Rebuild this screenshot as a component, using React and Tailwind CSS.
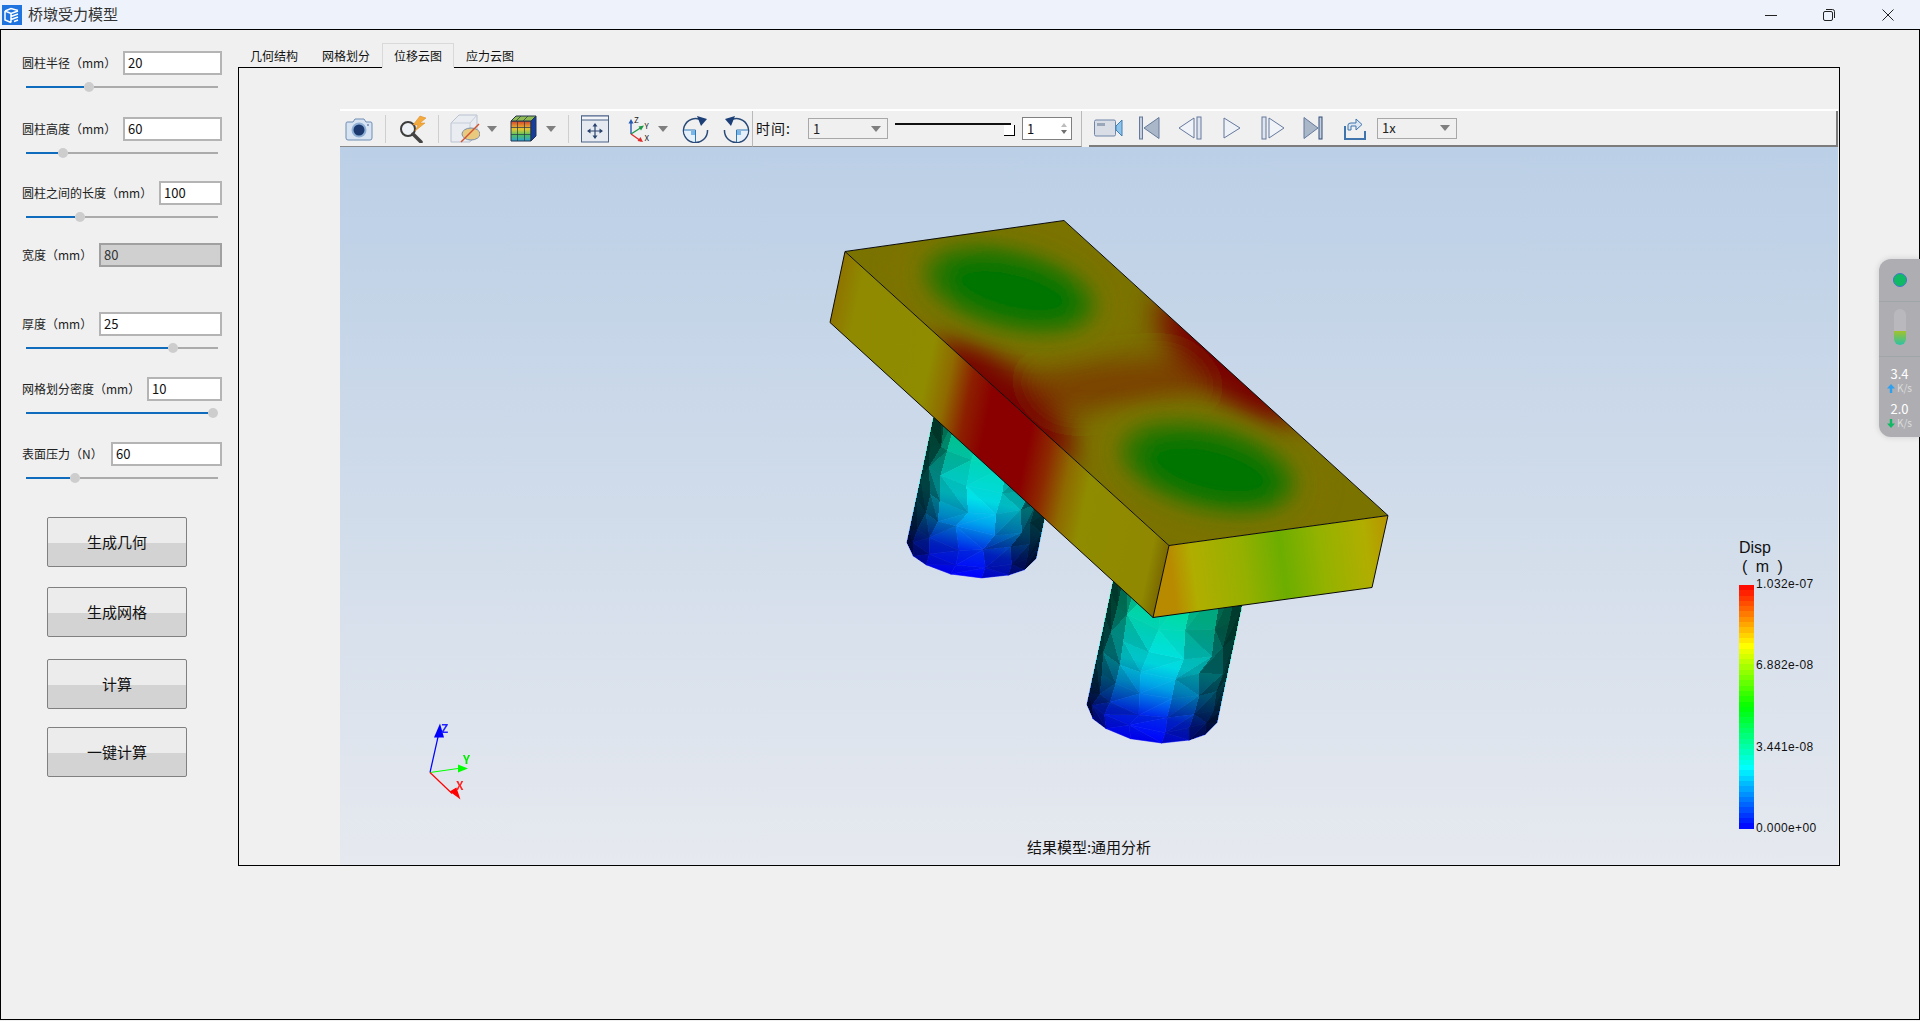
const fields = [
  { label: "圆柱半径（mm）", value: "20", inputClass: "w-[99px]", gapClass: "mt-0", thumb: 89 },
  { label: "圆柱高度（mm）", value: "60", inputClass: "w-[99px]", gapClass: "mt-[25px]", thumb: 63 },
  { label: "圆柱之间的长度（mm）", value: "100", inputClass: "w-[63px]", gapClass: "mt-[23px]", thumb: 80 },
  { label: "宽度（mm）", value: "80", inputClass: "w-[123px]", gapClass: "mt-[21px]", disabled: true },
  { label: "厚度（mm）", value: "25", inputClass: "w-[123px]", gapClass: "mt-[46px]", thumb: 173 },
  { label: "网格划分密度（mm）", value: "10", inputClass: "w-[75px]", gapClass: "mt-[24px]", thumb: 215 },
  { label: "表面压力（N）", value: "60", inputClass: "w-[111px]", gapClass: "mt-[24px]", thumb: 75 },
];

const actions = [
  { label: "生成几何", gapClass: "mt-[34px]" },
  { label: "生成网格", gapClass: "mt-[20px]" },
  { label: "计算", gapClass: "mt-[22px]" },
  { label: "一键计算", gapClass: "mt-[18px]" },
];

const tabs = ["几何结构", "网格划分", "位移云图", "应力云图"];

function Slider({ thumb }) {
  return (
    <div className="mt-[8px] ml-[25px] flex h-[10px] w-[192px] items-center">
      <div className="h-[2px] bg-[#0f6cbd]" style={{ width: thumb - 31 }} />
      <div className="h-[10px] w-[10px] shrink-0 rounded-full bg-[#cdcdcd]" />
      <div className="h-[2px] flex-1 bg-[#ababab]" />
    </div>
  );
}

function Field({ label, value, inputClass, gapClass, thumb, disabled }) {
  return (
    <div className={gapClass}>
      <div className="flex h-[23px] items-center justify-between pl-[21px] pr-[16px]">
        <span className="text-[12px] text-[#222]">{label}</span>
        <input
          readOnly
          value={value}
          className={`h-[24px] border-2 pl-[3px] text-[13px] outline-none ${inputClass} ${
            disabled ? "border-[#a0a0a0] bg-[#d0d0d0] text-[#333]" : "border-[#b4b4b4] bg-white text-[#111]"
          }`}
        />
      </div>
      {thumb && <Slider thumb={thumb} />}
    </div>
  );
}

function Sidebar() {
  return (
    <div className="w-[237px] shrink-0 pt-[21px]">
      {fields.map((f) => (
        <Field key={f.label} {...f} />
      ))}
      {actions.map((a) => (
        <div key={a.label} className={a.gapClass}>
          <button className="ml-[46px] block h-[50px] w-[140px] rounded-[2px] border border-[#808080] bg-[linear-gradient(#ececec_0_52%,#d3d3d3_52%_100%)] text-[15px] text-[#111]">
            {a.label}
          </button>
        </div>
      ))}
    </div>
  );
}

function Arrow({ className }) {
  return (
    <svg viewBox="0 0 10 6" className={`h-[6px] w-[10px] shrink-0 ${className}`}>
      <path d="M0 0H10L5 6Z" fill="#7f7f7f" />
    </svg>
  );
}

function ToolSep({ className }) {
  return <div className={`h-[28px] w-px shrink-0 bg-[#cfcfcf] ${className}`} />;
}

function CameraIcon({ className }) {
  return (
    <svg viewBox="0 0 28 24" className={`h-[24px] w-[28px] shrink-0 ${className}`}>
      <path d="M2 5H8L10 2H19L21 5H26Q27 5 27 7V21Q27 23 25 23H3Q1 23 1 21V7Q1 5 2 5Z" fill="#d8e4f2" stroke="#6f8db3" />
      <circle cx="14" cy="13" r="7.5" fill="#8fb0d4" />
      <circle cx="14" cy="13" r="5.5" fill="#1d3a70" />
      <circle cx="23" cy="8" r="1" fill="#6f8db3" />
    </svg>
  );
}

function SearchBoltIcon({ className }) {
  return (
    <svg viewBox="0 0 29 28" className={`h-[28px] w-[29px] shrink-0 ${className}`}>
      <circle cx="10" cy="14" r="7" fill="#eef2f6" stroke="#3c3c3c" strokeWidth="2" />
      <path d="M15 19L23 27" stroke="#444" strokeWidth="3.5" strokeLinecap="round" />
      <path d="M22 1L15 10H20L17 16L27 8H22L28 3Z" fill="#f3a93c" stroke="#d9851c" strokeWidth="0.5" />
    </svg>
  );
}

function HiddenCubeIcon({ className }) {
  return (
    <svg viewBox="0 0 30 29" className={`h-[29px] w-[30px] shrink-0 ${className}`}>
      <path d="M1 9L9 1H27V21L20 28H1Z" fill="#e9ecf1" stroke="#b9c2cf" />
      <path d="M1 9H20V28M20 9L27 1" fill="none" stroke="#c6ced9" />
      <ellipse cx="21" cy="20" rx="9" ry="6" fill="#e8c97e" stroke="#7d8fa8" />
      <path d="M11 28L29 10" stroke="#d3522e" strokeWidth="1.5" />
    </svg>
  );
}

function ColorCubeIcon({ className }) {
  return (
    <svg viewBox="0 0 27 27" className={`h-[27px] w-[27px] shrink-0 ${className}`}>
      <defs>
        <linearGradient id="cubeFront" x1="0" y1="0" x2="0" y2="1">
          <stop offset="0" stopColor="#d9402b" />
          <stop offset="0.4" stopColor="#e7c832" />
          <stop offset="0.7" stopColor="#50c060" />
          <stop offset="1" stopColor="#2aa0d8" />
        </linearGradient>
      </defs>
      <path d="M1 6H21V26H1Z" fill="url(#cubeFront)" stroke="#24364f" />
      <path d="M1 6L6 1H26L21 6Z" fill="#8fbb52" stroke="#24364f" />
      <path d="M21 6L26 1V21L21 26Z" fill="#173e9c" stroke="#24364f" />
      <path d="M7.5 6V26M14.5 6V26M1 12.5H21M1 19.5H21M11 1L6 6M18 1L13 6" stroke="#24364f" strokeWidth="0.7" />
    </svg>
  );
}

function FitIcon({ className }) {
  return (
    <svg viewBox="0 0 28 28" className={`h-[28px] w-[28px] shrink-0 ${className}`}>
      <rect x="0.5" y="1" width="27" height="26" fill="#e6eaf1" stroke="#4a6288" />
      <rect x="0.5" y="1" width="27" height="4" fill="#f2f4f8" stroke="#4a6288" />
      <path d="M14 9V23M7 16H21" stroke="#2c4570" strokeWidth="1.2" />
      <path d="M14 8L11.5 11.5H16.5ZM14 24L11.5 20.5H16.5ZM6 16L9.5 13.5V18.5ZM22 16L18.5 13.5V18.5Z" fill="#2c4570" />
    </svg>
  );
}

function AxesIcon({ className }) {
  return (
    <svg viewBox="0 0 26 28" className={`h-[28px] w-[26px] shrink-0 ${className}`}>
      <path d="M5 19V6" stroke="#2557b5" strokeWidth="1.4" />
      <path d="M5 4L2.5 8.5H7.5Z" fill="#2557b5" />
      <path d="M5 19L16 12" stroke="#1d9a47" strokeWidth="1.4" />
      <path d="M18 10.5L12.5 11.5L15 15.5Z" fill="#1d9a47" />
      <path d="M5 19L15 26" stroke="#e02b2b" strokeWidth="1.4" />
      <path d="M17 27L11.5 26L14.5 22Z" fill="#e02b2b" />
      <text x="8" y="7.5" fontSize="8" fill="#222">Z</text>
      <text x="18.5" y="14" fontSize="8" fill="#222">Y</text>
      <text x="18.5" y="26" fontSize="8" fill="#222">X</text>
    </svg>
  );
}

function RotateIcon({ flip, className }) {
  return (
    <svg viewBox="0 0 27 28" className={`h-[28px] w-[27px] shrink-0 ${flip ? "-scale-x-100" : ""} ${className}`}>
      <path d="M20 5.5A12 12 0 1 0 25.5 15" fill="none" stroke="#294a78" strokeWidth="1.5" />
      <path d="M15 1L25 4L19 11Z" fill="#1d3f78" />
      <path d="M13.5 15V26.5A11.5 11.5 0 0 1 2 15Z" fill="#e6f0fa" />
      <path d="M13.5 15H2M13.5 15V27" stroke="#2f78b8" strokeWidth="1" />
      <rect x="9" y="16" width="4" height="4" fill="#7ab7e6" />
    </svg>
  );
}

function CamRecIcon({ className }) {
  return (
    <svg viewBox="0 0 29 18" className={`h-[18px] w-[29px] shrink-0 ${className}`}>
      <rect x="0.5" y="1" width="21" height="16" rx="1.5" fill="#d9dee6" stroke="#6f86a8" />
      <rect x="3" y="4" width="8" height="3" fill="#9aa7b8" />
      <path d="M22 7L28 1V17L22 11Z" fill="#8fc4ea" stroke="#3f7fb8" />
    </svg>
  );
}

const playerStroke = "#64799c";

function PlayerIcon({ kind, className }) {
  if (kind === "first")
    return (
      <svg viewBox="0 0 21 24" className={`h-[24px] w-[21px] shrink-0 ${className}`}>
        <rect x="0.5" y="1" width="3" height="22" fill="#c5cfdd" stroke={playerStroke} />
        <path d="M20 1.5V22.5L5 12Z" fill="#aab7c9" stroke={playerStroke} />
      </svg>
    );
  if (kind === "prev")
    return (
      <svg viewBox="0 0 24 24" className={`h-[24px] w-[24px] shrink-0 ${className}`}>
        <path d="M16 2V22L1 12Z" fill="#f0f3f7" stroke={playerStroke} />
        <rect x="19" y="1" width="4" height="22" fill="#dfe5ee" stroke={playerStroke} />
      </svg>
    );
  if (kind === "play")
    return (
      <svg viewBox="0 0 18 24" className={`h-[24px] w-[18px] shrink-0 ${className}`}>
        <path d="M1 2V22L17 12Z" fill="#eef1f6" stroke={playerStroke} />
      </svg>
    );
  if (kind === "next")
    return (
      <svg viewBox="0 0 24 24" className={`h-[24px] w-[24px] shrink-0 ${className}`}>
        <rect x="1" y="1" width="4" height="22" fill="#dfe5ee" stroke={playerStroke} />
        <path d="M8 2V22L23 12Z" fill="#f0f3f7" stroke={playerStroke} />
      </svg>
    );
  return (
    <svg viewBox="0 0 20 24" className={`h-[24px] w-[20px] shrink-0 ${className}`}>
      <path d="M1 1.5V22.5L15 12Z" fill="#aab7c9" stroke={playerStroke} />
      <rect x="16" y="1" width="3" height="22" fill="#c5cfdd" stroke="#2f4d78" />
    </svg>
  );
}

function ExportIcon({ className }) {
  return (
    <svg viewBox="0 0 23 25" className={`h-[25px] w-[23px] shrink-0 ${className}`}>
      <path d="M2 10V23H22V15" fill="none" stroke="#3f74ad" strokeWidth="2" />
      <path d="M5 14V9Q5 7 8 7H13V3L19 8.5L13 14V10H8V14Z" fill="#dbe6f2" stroke="#3f74ad" />
    </svg>
  );
}

function Combo({ value, className }) {
  return (
    <div className={`flex h-[21px] w-[80px] shrink-0 items-center justify-between border border-[#a8a8a8] bg-[#f0f0f0] pl-[4px] pr-[6px] text-[13px] text-[#222] ${className}`}>
      <span>{value}</span>
      <Arrow />
    </div>
  );
}

function Toolbar() {
  return (
    <div className="flex h-[38px] shrink-0 border-t-2 border-white">
      <div className="flex w-[412px] shrink-0 items-center border-b border-[#8a8a8a]">
        <CameraIcon className="ml-[5px]" />
        <ToolSep className="ml-[12px]" />
        <SearchBoltIcon className="ml-[12px]" />
        <ToolSep className="ml-[11px]" />
        <HiddenCubeIcon className="ml-[11px]" />
        <Arrow className="ml-[7px]" />
        <ColorCubeIcon className="ml-[13px]" />
        <Arrow className="ml-[9px]" />
        <ToolSep className="ml-[12px]" />
        <FitIcon className="ml-[12px]" />
        <AxesIcon className="ml-[17px]" />
        <Arrow className="ml-[6px]" />
        <RotateIcon className="ml-[14px]" />
        <RotateIcon flip className="ml-[14px]" />
      </div>
      <div className="flex w-[330px] shrink-0 items-center border-x border-b border-x-[#b9b9b9] border-b-[#8a8a8a]">
        <span className="ml-[3px] w-[52px] shrink-0 text-[14px] tracking-[1px] text-[#111]">时间:</span>
        <Combo value="1" />
        <div className="ml-[7px] h-[18px] w-[120px] shrink-0">
          <div className="mt-[3px] h-[2px] w-[116px] bg-[#111]" />
          <div className="ml-[109px] h-[11px] w-[11px] border-r border-b border-black bg-white" />
        </div>
        <div className="ml-[7px] flex h-[23px] w-[50px] shrink-0 items-center justify-between border border-[#808080] bg-white pl-[4px] pr-[4px] text-[13px] text-[#111]">
          <span>1</span>
          <div className="flex flex-col gap-[3px]">
            <svg viewBox="0 0 6 4" className="h-[4px] w-[6px]"><path d="M0 4H6L3 0Z" fill="#bdbdbd" /></svg>
            <svg viewBox="0 0 6 4" className="h-[4px] w-[6px]"><path d="M0 0H6L3 4Z" fill="#707070" /></svg>
          </div>
        </div>
      </div>
      <div className="w-[7px] shrink-0" />
      <div className="flex flex-1 items-center border-r-2 border-b-2 border-[#7c7c7c]">
        <CamRecIcon className="ml-[5px]" />
        <PlayerIcon kind="first" className="ml-[16px]" />
        <PlayerIcon kind="prev" className="ml-[18px]" />
        <PlayerIcon kind="play" className="ml-[21px]" />
        <PlayerIcon kind="next" className="ml-[20px]" />
        <PlayerIcon kind="last" className="ml-[18px]" />
        <ExportIcon className="ml-[20px]" />
        <Combo value="1x" className="ml-[11px]" />
      </div>
    </div>
  );
}

// 腿部网格: 颜色走沿轴渐变, 每个三角形再按横向位置压暗
const lerp = (a, b, t) => a + (b - a) * t;
const noise = (i) => {
  const s = Math.sin(i * 12.9898) * 43758.5453;
  return s - Math.floor(s);
};

const legStops = [
  [0.2, "#00e8b0"],
  [0.36, "#00e4d0"],
  [0.52, "#00e4ec"],
  [0.66, "#00a5ee"],
  [0.84, "#0028eb"],
  [1, "#0000ff"],
];
const shadeStops = [
  [0, 0.18],
  [0.07, 0.34],
  [0.18, 0.72],
  [0.38, 0.97],
  [0.55, 1],
  [0.75, 0.72],
  [0.9, 0.36],
  [1, 0.18],
];

function sample(stops, t) {
  for (let i = 1; i < stops.length; i++) {
    if (t <= stops[i][0]) {
      const k = (t - stops[i - 1][0]) / (stops[i][0] - stops[i - 1][0]);
      const a = stops[i - 1][1];
      const b = stops[i][1];
      return Array.isArray(a) ? a.map((v, n) => lerp(v, b[n], k)) : lerp(a, b, k);
    }
  }
  return stops[stops.length - 1][1];
}

function legFacets({ L0, L1, R0, R1, arc, seed }) {
  const us = [0, 0.07, 0.18, 0.38, 0.62, 0.82, 0.93, 1];
  const vs = [0, 0.3, 0.46, 0.6, 0.72, 0.84, 0.93, 1];
  const len = Math.hypot(L1[0] - L0[0], L1[1] - L0[1]);
  const axis = [(L1[0] - L0[0]) / len, (L1[1] - L0[1]) / len];
  const point = (i, j) => {
    const u = us[i];
    const v = vs[j];
    const inner = i > 0 && i < us.length - 1 && j > 0 && j < vs.length - 1;
    const wob = inner ? (noise(seed + i * 31 + j * 7) - 0.5) * 9 : 0;
    const bulge = Math.sqrt(Math.max(0, Math.sin(Math.PI * u))) * arc;
    const lx = lerp(L0[0], L1[0], v);
    const ly = lerp(L0[1], L1[1], v);
    const rx = lerp(R0[0], R1[0], v);
    const ry = lerp(R0[1], R1[1], v);
    return [lerp(lx, rx, u) + axis[0] * bulge + wob, lerp(ly, ry, u) + axis[1] * bulge + wob * 0.7];
  };
  const tris = [];
  for (let i = 0; i < us.length - 1; i++) {
    for (let j = 0; j < vs.length - 1; j++) {
      const corners = [[i, j], [i + 1, j], [i + 1, j + 1], [i, j + 1]];
      const [a, b, c, d] = corners;
      const flip = noise(seed + i * 5 + j * 11) > 0.5;
      const pairs = flip ? [[a, b, c], [a, c, d]] : [[a, b, d], [b, c, d]];
      pairs.forEach((tri, n) => {
        const u = tri.reduce((s, p) => s + us[p[0]], 0) / 3;
        const shade = sample(shadeStops, u) * (0.94 + noise(seed + i * 13 + j * 17 + n) * 0.1);
        const pts = tri.map((p) => point(p[0], p[1]).map((x) => x.toFixed(1)).join(",")).join(" ");
        tris.push({ points: pts, dark: Math.max(0, 1 - shade).toFixed(3) });
      });
    }
  }
  const start = [(L0[0] + R0[0]) / 2 + axis[0] * arc, (L0[1] + R0[1]) / 2 + axis[1] * arc];
  const end = [(L1[0] + R1[0]) / 2 + axis[0] * arc, (L1[1] + R1[1]) / 2 + axis[1] * arc];
  return { tris, start, end };
}

const legs = [
  { id: "legBack", ...legFacets({ L0: [941, 383], L1: [907, 543], R0: [1070, 399], R1: [1036, 559], arc: 27, seed: 3 }) },
  { id: "legFront", ...legFacets({ L0: [1121, 545], L1: [1087, 705], R0: [1251, 563], R1: [1217, 723], arc: 29, seed: 9 }) },
];

function Leg({ id, tris, start, end }) {
  return (
    <g>
      <defs>
        <linearGradient id={id} gradientUnits="userSpaceOnUse" x1={start[0]} y1={start[1]} x2={end[0]} y2={end[1]}>
          {legStops.map(([o, c]) => (
            <stop key={o} offset={o} stopColor={c} />
          ))}
        </linearGradient>
      </defs>
      {tris.map((t, i) => (
        <polygon key={i} points={t.points} fill={`url(#${id})`} stroke={`url(#${id})`} strokeWidth="0.6" />
      ))}
      {tris.map((t, i) => (
        <polygon key={i} points={t.points} fill="#000" fillOpacity={t.dark} shapeRendering="crispEdges" />
      ))}
    </g>
  );
}

function Model() {
  return (
    <svg viewBox="340 148 1498 717" className="absolute inset-0 h-full w-full">
      <defs>
        <linearGradient id="sideFace" gradientUnits="userSpaceOnUse" x1="845" y1="252" x2="1214" y2="330">
          <stop offset="0" stopColor="#8f7400" />
          <stop offset="0.06" stopColor="#8f8a00" />
          <stop offset="0.28" stopColor="#8f8c00" />
          <stop offset="0.34" stopColor="#8f6a00" />
          <stop offset="0.4" stopColor="#8c2000" />
          <stop offset="0.46" stopColor="#8a0000" />
          <stop offset="0.58" stopColor="#8a0000" />
          <stop offset="0.64" stopColor="#8c2a00" />
          <stop offset="0.7" stopColor="#8e6a00" />
          <stop offset="0.76" stopColor="#8f8c00" />
          <stop offset="0.96" stopColor="#8f8800" />
          <stop offset="1" stopColor="#7c6a00" />
        </linearGradient>
        <linearGradient id="endFace" gradientUnits="userSpaceOnUse" x1="1168" y1="546" x2="1388" y2="516">
          <stop offset="0" stopColor="#b88a00" />
          <stop offset="0.1" stopColor="#b0ae00" />
          <stop offset="0.32" stopColor="#96b000" />
          <stop offset="0.5" stopColor="#6cae00" />
          <stop offset="0.68" stopColor="#94b200" />
          <stop offset="0.88" stopColor="#b0ae00" />
          <stop offset="1" stopColor="#b89400" />
        </linearGradient>
        <clipPath id="topClip">
          <polygon points="845,252 1064,221 1388,516 1169,546" />
        </clipPath>
        <filter id="softA" filterUnits="userSpaceOnUse" x="700" y="100" width="800" height="600">
          <feGaussianBlur stdDeviation="15" />
        </filter>
        <filter id="softB" filterUnits="userSpaceOnUse" x="700" y="100" width="800" height="600">
          <feGaussianBlur stdDeviation="11" />
        </filter>
      </defs>

      {legs.map((leg) => (
        <Leg key={leg.id} {...leg} />
      ))}

      <polygon points="845,252 1169,546 1153,618 830,323" fill="url(#sideFace)" />
      <polygon points="1169,546 1388,516 1372,588 1153,618" fill="url(#endFace)" />

      <g clipPath="url(#topClip)">
        <polygon points="845,252 1064,221 1388,516 1169,546" fill="#7b7300" />
        <g filter="url(#softA)">
          <ellipse cx="1115" cy="385" rx="120" ry="24" transform="rotate(-6 1115 385)" fill="#7a4000" />
          <ellipse cx="1005" cy="402" rx="90" ry="32" transform="rotate(42 1005 402)" fill="#780000" />
          <ellipse cx="1228" cy="362" rx="90" ry="34" transform="rotate(42 1228 362)" fill="#780000" />
        </g>
        <g filter="url(#softB)">
          <ellipse cx="1008" cy="290" rx="116" ry="56" transform="rotate(14 1008 290)" fill="#7e7500" />
          <ellipse cx="1206" cy="466" rx="116" ry="56" transform="rotate(14 1206 466)" fill="#7e7500" />
        </g>
        <g filter="url(#softB)">
          <ellipse cx="1010" cy="290" rx="88" ry="40" transform="rotate(14 1010 290)" fill="#2f7500" />
          <ellipse cx="1208" cy="468" rx="90" ry="42" transform="rotate(14 1208 468)" fill="#2f7500" />
          <ellipse cx="1012" cy="291" rx="72" ry="31" transform="rotate(14 1012 291)" fill="#007500" />
          <ellipse cx="1210" cy="470" rx="74" ry="33" transform="rotate(14 1210 470)" fill="#007500" />
        </g>
      </g>

      <path
        d="M845 252L1064 221L1388 516L1169 546ZM845 252L830 323L1153 618L1169 546M1153 618L1372 588L1388 516"
        fill="none"
        stroke="#0a0a0a"
        strokeWidth="1"
        strokeLinejoin="round"
      />

      {/* 坐标轴 */}
      <g strokeWidth="1.2">
        <path d="M430 773L439 733" stroke="#0000ff" />
        <path d="M440 724L434 738H444Z" fill="#0000ff" />
        <path d="M430 773L458 769" stroke="#00ff00" />
        <path d="M468 769L458 765V773Z" fill="#00ff00" />
        <path d="M430 773L452 794" stroke="#ff0000" />
        <path d="M459 798L451 792L456 789Z" fill="#ff0000" stroke="#ff0000" strokeWidth="1.5" />
      </g>
      <text x="441" y="733" fontSize="12" fontWeight="700" fill="#2222ff">Z</text>
      <text x="463" y="764" fontSize="12" fontWeight="700" fill="#00ee00">Y</text>
      <text x="456" y="790" fontSize="12" fontWeight="700" fill="#ff2222">X</text>
    </svg>
  );
}

const legendStops = [
  [0, [255, 0, 0]],
  [0.25, [255, 255, 0]],
  [0.5, [0, 255, 0]],
  [0.75, [0, 255, 255]],
  [1, [0, 0, 255]],
];
const legendBands = Array.from({ length: 46 }, (_, i) => {
  const rgb = sample(legendStops, (i + 0.5) / 46).map(Math.round);
  return `rgb(${rgb.join(",")})`;
});

const legendLabels = ["1.032e-07", "6.882e-08", "3.441e-08", "0.000e+00"];

function Legend() {
  return (
    <div className="absolute left-[1399px] top-[391px] w-[90px] text-[#111] [font-family:'Liberation_Sans',sans-serif]">
      <div className="text-[16px] leading-[19px]">Disp</div>
      <div className="pl-[3px] text-[16px] leading-[19px] tracking-[2px]">( m )</div>
      <div className="mt-[9px] flex">
        <div className="flex h-[244px] w-[15px] flex-col">
          {legendBands.map((c, i) => (
            <div key={i} className="flex-1" style={{ background: c }} />
          ))}
        </div>
        <div className="-mt-[7px] ml-[2px] flex h-[256px] flex-col justify-between text-[12px] leading-[12px] tracking-[0.4px]">
          {legendLabels.map((l) => (
            <span key={l}>{l}</span>
          ))}
        </div>
      </div>
    </div>
  );
}

function Viewer() {
  return (
    <div className="relative flex-1 bg-[linear-gradient(#bbcfe6,#e6e9ef)]">
      <Model />
      <Legend />
      <div className="absolute inset-x-0 bottom-[8px] text-center text-[15px] leading-[20px] text-[#111]">
        结果模型:通用分析
      </div>
    </div>
  );
}

function Tabs() {
  return (
    <div className="relative z-10 -mb-px flex h-[25px]">
      {tabs.map((t) => (
        <div
          key={t}
          className={`flex w-[72px] items-center justify-center text-[12px] text-[#111] ${
            t === "位移云图" ? "border border-b-[#f0f0f0] border-[#d9d9d9] bg-[#f0f0f0]" : ""
          }`}
        >
          {t}
        </div>
      ))}
    </div>
  );
}

function MainPanel() {
  return (
    <div className="w-[1602px] shrink-0 pt-[13px]">
      <Tabs />
      <div className="flex h-[799px] border border-black">
        <div className="w-[101px] shrink-0" />
        <div className="flex flex-1 flex-col pr-[1px]">
          <div className="h-[41px] shrink-0" />
          <Toolbar />
          <Viewer />
        </div>
      </div>
    </div>
  );
}

function TitleBar() {
  return (
    <div className="flex h-[29px] shrink-0 items-center bg-[#eef3fb]">
      <svg viewBox="0 0 20 20" className="ml-[2px] h-[20px] w-[20px]">
        <rect width="20" height="20" fill="#1f74e0" />
        <path d="M3 6L9 3.5L16 5.5M3 6V15L9 17.5M9 8.5V17.5M3 6L9 8.5L16 6M9 11.5L16 9M9 14.5L16 12M12 16.5L16 15" fill="none" stroke="#fff" strokeWidth="1.5" />
      </svg>
      <span className="ml-[6px] text-[15px] text-[#333]">桥墩受力模型</span>
      <svg viewBox="0 0 12 12" className="ml-auto h-[12px] w-[12px]">
        <path d="M0 6.5H12" stroke="#222" />
      </svg>
      <svg viewBox="0 0 12 12" className="ml-[46px] h-[12px] w-[12px]">
        <rect x="0.5" y="2.5" width="9" height="9" rx="1.5" fill="none" stroke="#222" />
        <path d="M3 0.5H9.5Q11.5 0.5 11.5 2.5V9" fill="none" stroke="#222" />
      </svg>
      <svg viewBox="0 0 12 12" className="ml-[47px] mr-[26px] h-[12px] w-[12px]">
        <path d="M0.5 0.5L11.5 11.5M11.5 0.5L0.5 11.5" stroke="#222" />
      </svg>
    </div>
  );
}

function SpeedWidget() {
  return (
    <div className="absolute right-0 top-[259px] flex h-[178px] w-[41px] flex-col items-center rounded-l-[12px] bg-[#aeaeb2] shadow-[0_0_6px_rgba(0,0,0,0.15)]">
      <div className="mt-[14px] h-[14px] w-[14px] rounded-full border border-[#3f78c8] bg-[#10b964]" />
      <div className="mt-[14px] h-px w-full bg-[#a0a6a8]" />
      <div className="mt-[7px] flex h-[36px] w-[12px] flex-col overflow-hidden rounded-full bg-[#b9b9bd]">
        <div className="h-[22px]" />
        <div className="flex-1 bg-[linear-gradient(#a2c22c,#2cc2a6)]" />
      </div>
      <div className="mt-[11px] h-px w-full bg-[#a0a6a8]" />
      <div className="mt-[9px] text-[13px] leading-[16px] text-white">3.4</div>
      <div className="flex items-center text-[10px] leading-[12px] text-[#dcdcdc]">
        <svg viewBox="0 0 8 9" className="mr-[2px] h-[9px] w-[8px]"><path d="M4 0L8 4.5H5.2V9H2.8V4.5H0Z" fill="#2ea0f0" /></svg>
        K/s
      </div>
      <div className="mt-[7px] text-[13px] leading-[16px] text-white">2.0</div>
      <div className="flex items-center text-[10px] leading-[12px] text-[#dcdcdc]">
        <svg viewBox="0 0 8 9" className="mr-[2px] h-[9px] w-[8px]"><path d="M4 9L8 4.5H5.2V0H2.8V4.5H0Z" fill="#10b964" /></svg>
        K/s
      </div>
    </div>
  );
}

export default function App() {
  return (
    <div className="relative flex h-[1021px] w-[1920px] flex-col overflow-hidden bg-[#f0f0f0] [font-family:'Noto_Sans_CJK_SC','Liberation_Sans',sans-serif]">
      <TitleBar />
      <div className="mb-[1px] flex flex-1 border border-black bg-[#f0f0f0]">
        <Sidebar />
        <MainPanel />
      </div>
      <SpeedWidget />
    </div>
  );
}
